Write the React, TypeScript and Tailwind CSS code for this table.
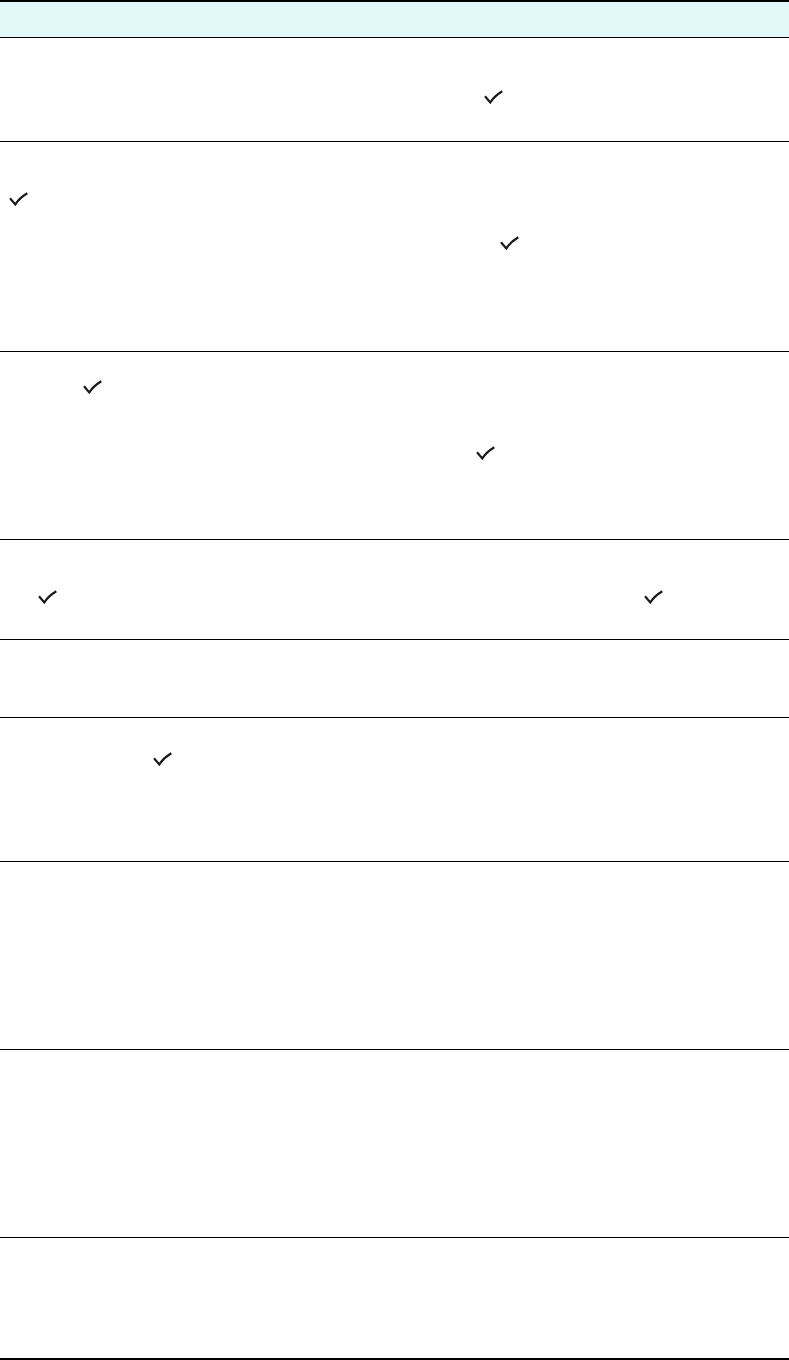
import React from "react";

function Check() {
  return (
    <svg width="19" height="14" viewBox="0 0 19 14" className="block">
      <path d="M1 6.2 L6.3 12.4 Q10.5 6 18.3 1.3" fill="none" stroke="#1a1a1a" strokeWidth="2.2" strokeLinejoin="miter" />
    </svg>
  );
}

export default function App() {
  return (
    <div className="w-[789px] bg-white font-['Liberation_Sans',sans-serif]">
      <div className="border-t-2 border-b-2 border-black">
        <div className="h-[36px] bg-[#e3f8f8] border-b border-black" />
        <div className="h-[104px] border-b border-black pt-[52px] pl-[484px]">
          <Check />
        </div>
        <div className="h-[210px] border-b border-black pt-[50px]">
          <div className="ml-[9px]"><Check /></div>
          <div className="ml-[500px] mt-[30px]"><Check /></div>
        </div>
        <div className="h-[188px] border-b border-black pt-[28px]">
          <div className="ml-[83px]"><Check /></div>
          <div className="ml-[476px] mt-[52px]"><Check /></div>
        </div>
        <div className="h-[100px] border-b border-black pt-[50px] flex">
          <div className="ml-[38px]"><Check /></div>
          <div className="ml-[587px]"><Check /></div>
        </div>
        <div className="h-[78px] border-b border-black" />
        <div className="h-[144px] border-b border-black pt-[34px] pl-[153px]">
          <Check />
        </div>
        <div className="h-[188px] border-b border-black" />
        <div className="h-[188px] border-b border-black" />
        <div className="h-[120px]" />
      </div>
    </div>
  );
}
